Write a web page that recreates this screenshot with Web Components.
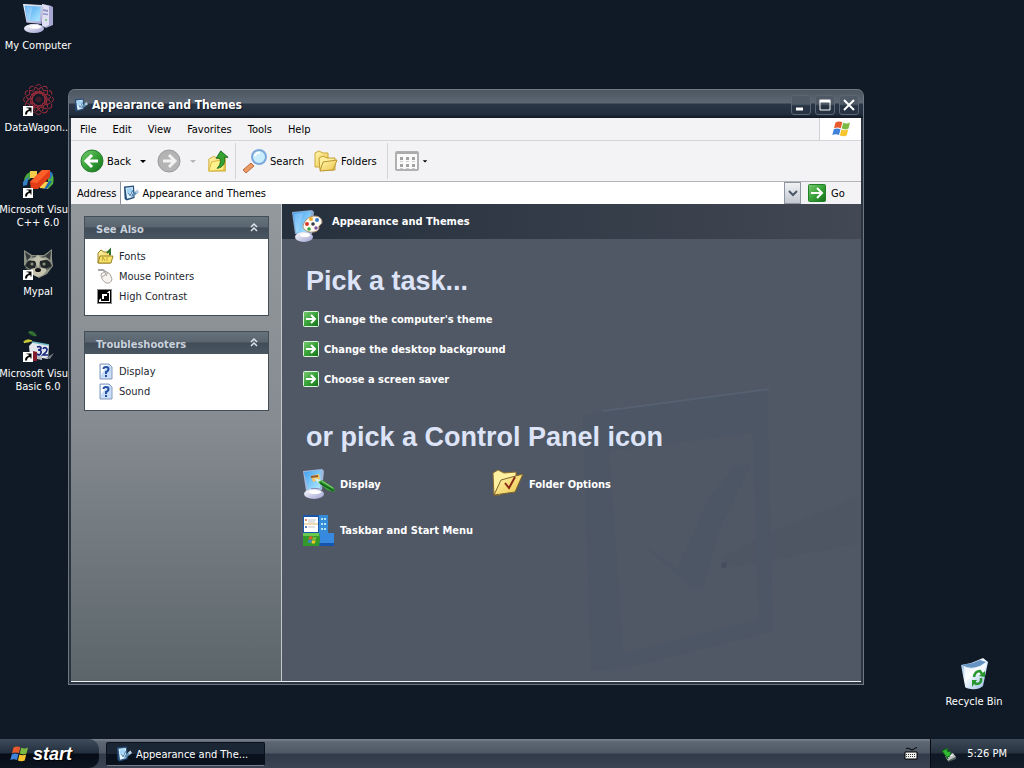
<!DOCTYPE html>
<html lang="en">
<head>
<meta charset="utf-8">
<title>Appearance and Themes</title>
<style>
    html, body {
        height: 100%;
        margin: 0;
        overflow: hidden;
    }

    body {
        --desktop: #101a26;
        --bar: #f3f3f5;
        --heading: #dde4f8;
        background: var(--desktop);
        color: #000;
        font: 11px/13px "DejaVu Sans Condensed", "DejaVu Sans", sans-serif;
    }
</style>
</head>
<body>
<xp-desktop></xp-desktop>

<script>
const GREEN = `<linearGradient id="g" x1="0" y1="0" x2="1" y2="1"><stop offset="0" stop-color="#7ccb74"/><stop offset=".5" stop-color="#37a238"/><stop offset="1" stop-color="#17701c"/></linearGradient>`;
const SCREEN = `<linearGradient id="s" x1="0" y1="0" x2="1" y2="1"><stop offset="0" stop-color="#3f9df0"/><stop offset="1" stop-color="#b4ecff"/></linearGradient>`;
const SHELL = `<linearGradient id="w" x1="0" y1="0" x2="1" y2="1"><stop offset="0" stop-color="#fff"/><stop offset="1" stop-color="#9d9fd0"/></linearGradient>`;
const FOLDER = `<linearGradient id="f" x1="0" y1="0" x2="1" y2="1"><stop offset="0" stop-color="#fff6b0"/><stop offset="1" stop-color="#edc54a"/></linearGradient>`;
const SHORTCUT = `<rect x="1" y="22" width="10" height="10" fill="#fff"/><path d="M3 30.500c0-3 1.500-4.500 3.500-4.500v-1.700H4.500V23.500h5v5h-1V27c-2 0-3.500 1-3.500 3.500z" fill="#000"/>`;
const FLAG = `
    <path d="M4.500 3.500Q8 1.500 11.300 3.300L9.800 9.200Q6.500 7.700 3 9.300z" fill="#e8592b"/>
    <path d="M12.200 3.700Q15.500 5.300 19 3.600L17.500 9.500Q14.200 11.200 10.700 9.600z" fill="#7cbb42"/>
    <path d="M2.800 10.200Q6.300 8.600 9.500 10.200L8 16Q4.700 14.400 1.300 16z" fill="#3f82d8"/>
    <path d="M10.400 10.500Q13.900 12.100 17.200 10.500L15.700 16.400Q12.300 18 8.900 16.400z" fill="#f6c42c"/>`;
const THEMES = `
    <path d="M1 1.500l10-1 .6 12.500-8 2.500-2-1.500z" fill="#264f7c"/>
    <path d="M2.500 2.800l7.400-.8.400 9.900-6.300 1.800z" fill="#e2f3ff"/>
    <path d="M3.500 3.500l5.500-.6.300 4-5.300 1.500z" fill="#a3d3f2"/>
    <path d="M5.500 8l1.500 2.800L10 5" fill="none" stroke="#4378a8"/>
    <path d="M8 12l1-3 4.500-3.500 2 2-4.500 3.500z" fill="#5e8db1"/><path d="M12 6.500l2.500-2 1.500 2.500-2.500 1.700z" fill="#b8cde0"/>`;

const ICONS = {
    computer: [32, `${SCREEN}${SHELL}
        <path d="M20 2l8 1.500 3 1.500v18l-7 3-4-2z" fill="#a5a7d2"/><path d="M20 2l7 2v19l-4 2-3-2z" fill="#e0dff3"/>
        <path d="M21 7l5 1v2l-5-1zM21 11l5 .8v1.500l-5-.8z" fill="#8f92c0"/><circle cx="24" cy="18" r="1" fill="#6cc35a"/>
        <path d="M8 22h8l3 3-9 2z" fill="#8a8cba"/>
        <path d="M1 2l19 1 1.500 2-2 17-15-1.500z" fill="url(#w)"/><path d="M2.500 3.500L19 4.800 17.500 19.500 5 18.500z" fill="url(#s)"/>
        <path d="M3 4l8 .7L7.500 18.500l-2-.2z" fill="#fff" opacity=".25"/>
        <ellipse cx="12" cy="26.500" rx="10" ry="4.500" fill="url(#w)"/><ellipse cx="13" cy="24.800" rx="6" ry="2" fill="#fff"/>`],
    wagon: [32, `<g fill="none" stroke="#9c2c3b" stroke-width="1">${[0, 30, 60, 90, 120, 150].map(a =>
            `<ellipse cx="16.500" cy="15.500" rx="15" ry="6" transform="rotate(${a} 16.500 15.500)" stroke-dasharray="4 1 6 2"/>`).join("")}
        <circle cx="16.500" cy="15.500" r="8" stroke-dasharray="3 1"/></g><circle cx="16.500" cy="15.500" r="3" fill="#401b28"/>${SHORTCUT}`],
    vcpp: [32, `<path d="M8 6l7-1-7 8-6 3c0-5 2-8 6-10z" fill="#48a63c"/><path d="M8 5h7v7H8z" fill="#f5cd4c"/>
        <path d="M27 5c5 3 5 8 4 13l-5 5V13z" fill="#4fb43f"/><path d="M27 4l4 4-3 6-3-6z" fill="#2977c4"/>
        <path d="M1 16l6-6-2 9-4 1z" fill="#347fc5"/><path d="M18 22v-7l8 1v7z" fill="#f6cd51"/><path d="M27 15h3l-5 8h-3z" fill="#1e69ae"/>
        <path d="M8 16L20 4h8v7L16 23H9z" fill="#e23d16"/><path d="M8 16L20 4h8L15 17z" fill="#fb5f2a"/>${SHORTCUT}`],
    mypal: [32, `<path d="M2 2l8 5h12l8-6v10l1 7-6 8-8 4-9-5-6-8z" fill="#8d9285"/><path d="M3 4l6 4-4 5zM29 3l-6 5 5 4z" fill="#34393a"/>
        <path d="M5 14q5-5 10-1l-2 7-5 1-5-3zM17 13q6-4 11 1l2 4-6 3-5-2z" fill="#22282a"/>
        <path d="M5 12l8-2 3-3 3 3 8 1-9 2-2 7-3-7z" fill="#bfbfac"/><path d="M9 21l5-1h5l7 1-5 6-5 2-5-2z" fill="#c6c4ae"/>
        <path d="M10 9l4-1M20 9l4-1M3 20l5 2M29 19l-5 3" stroke="#4a504c"/>
        <circle cx="10" cy="16" r="1.500" fill="#8b9379"/><circle cx="22" cy="16" r="1.500" fill="#8b9379"/><ellipse cx="16" cy="22" rx="3" ry="2" fill="#111"/>${SHORTCUT}`],
    vbasic: [32, `<path d="M6 2c4-3 7 0 9 4-5 1-7-1-9-4z" fill="#245c2a"/><path d="M7 2q4 1 7 4" stroke="#4d8944" fill="none"/>
        <path d="M1 12c3-4 8-3 9-1-3 1-5 3-9 1z" fill="#a5ad28"/><path d="M2 13c3-3 5-2 8-2" fill="none" stroke="#ede855"/>
        <path d="M7 16L11 12l16 3-1 14-18-3z" fill="#e4e8ee"/><path d="M10 12l17 3" stroke="#71bac7" stroke-width="1.500"/>
        <path d="M24 28l8-5-4 6z" fill="#737a82"/><path d="M11 21l4 1v9h-4z" fill="#831d2d"/><path d="M15 25l5 1v4l-5-1z" fill="#b8bfc7"/>
        <g fill="none" stroke="#16257c" stroke-width="1.700"><path d="M15 17q4-1 4 1t-3 2q4 0 3 3t-4 1"/><path d="M21 19q1-2 3-1t0 4l-3 3h5"/></g>${SHORTCUT}`],
    recycle: [32, `<linearGradient id="r" x1="0" y1="0" x2="1" y2="1"><stop offset="0" stop-color="#7facdb"/><stop offset=".45" stop-color="#f4fbff"/><stop offset="1" stop-color="#8db5e0"/></linearGradient>
        <path d="M3 7l10-2 5-2 7-3 5 4-5 24q-5 4-12 3t-6-3z" fill="url(#r)"/><path d="M4 7l11-2 7-3 6 2-6 4q-10 4-18-1z" fill="#6593c2"/>
        <path d="M6 8q7 5 15 1L28 5l-2 13q-6-3-9-1t-10 5z" fill="#fff" opacity=".7"/>
        <g fill="none" stroke="#26962d" stroke-width="2.500"><path d="M16 19q1-6 6-6l2 3M23 20q1 6-5 6l-3-3"/></g><path d="M21 18l6-5v6zM19 22l-5 7v-7z" fill="#26962d"/>`],
    palette: [32, `${SCREEN}${SHELL}<path d="M0 2L20 0l2 2-2 22L3 24z" fill="#8ba9cd"/><path d="M1 3l18-2-2 21-13 1z" fill="url(#s)"/>
        <path d="M2 4l9-1-5 19-2 .5z" fill="#fff" opacity=".2"/><ellipse cx="12" cy="27" rx="9" ry="5" fill="url(#w)"/><ellipse cx="13" cy="25" rx="5" ry="2" fill="#fff"/>
        <path d="M14 10c5-6 16-5 16 2 0 3-4 3-3 6 0 4-9 6-14 2-4-3-1-7 1-10z" fill="#fffaf0" stroke="#a98f76"/>
        <circle cx="19" cy="9" r="2" fill="#f1ae2b"/><circle cx="25" cy="10" r="2" fill="#397dcd"/><circle cx="15" cy="14" r="2" fill="#d63b2d"/><circle cx="17" cy="19" r="1.800" fill="#36a43f"/><circle cx="24" cy="18" r="1.800" fill="#8355a6"/><circle cx="21" cy="14" r="1.800" fill="#333a4e"/>`],
    display: [32, `${SCREEN}${SHELL}<path d="M0 3L19 1l2 2-2 19L3 23z" fill="#9fb8dc"/><path d="M1 4l17-2-1 18L5 21z" fill="url(#s)"/>
        <path d="M8 8l8-2 1 5-7 3z" fill="#f5c665"/><path d="M8 9l7-1" stroke="#93572c" stroke-width="2"/>
        <path d="M8 20h7l3 4-8 2z" fill="#8a8cba"/><ellipse cx="11" cy="26" rx="10" ry="5" fill="url(#w)"/><ellipse cx="12" cy="24" rx="6" ry="2" fill="#fff"/>
        <path d="M11 10l7 2 2 5-5-2z" fill="#d3f0ec"/><path d="M15 14l4-2 12 8 1 4-8-2z" fill="#3ba43a"/><path d="M17 15l14 8" stroke="#126119" stroke-width="1.500"/><path d="M19 13l11 7" stroke="#83d070"/>`],
    folderOptions: [32, `${FOLDER}<path d="M1 5l5-3 6 3 12-1v8L8 27H2z" fill="#fff1a0" stroke="#8c6f32"/>
        <path d="M2 27l7-15 22-6-8 18z" fill="url(#f)" stroke="#7f6227"/><path d="M13 15l4 5 6-11" fill="none" stroke="#872a15" stroke-width="2"/>`],
    taskbar: [32, `<path d="M0 1h25v25H0z" fill="#1955a8"/><path d="M16 1h9v19h-9z" fill="#368bd8"/><path d="M1 3h14v15H1z" fill="#fff"/>
        <path d="M1 10h14" stroke="#deb663"/><path d="M5 6h8M5 8h7M5 13h7" stroke="#c4c4cc"/><circle cx="3" cy="6" r="1" fill="#dd6931"/><circle cx="3" cy="13" r="1" fill="#2551aa"/><path d="M18 5h5M18 10h5M18 15h5" stroke="#b1e3f9" stroke-width="2" stroke-dasharray="2 1"/>
        <path d="M15 19h16v13H15z" fill="#3788df"/><path d="M16 29h15v3H16z" fill="#1555ac"/><path d="M0 19h16q2 5 0 13H0z" fill="#34992b"/><path d="M0 19h16v3H0z" fill="#69c94e"/><g transform="translate(4 21) scale(.5)">${FLAG}</g>`],
    back: [24, `${GREEN}<circle cx="12" cy="12" r="11" fill="url(#g)" stroke="#257e2b"/><path d="M12 6l-6 6 6 6M7 12h11" fill="none" stroke="#fff" stroke-width="3"/>`],
    forward: [24, `<circle cx="12" cy="12" r="11" fill="#b4b4b4" stroke="#999"/><path d="M12 6l6 6-6 6M17 12H6" fill="none" stroke="#f2f2f2" stroke-width="3"/>`],
    up: [24, `${FOLDER}<path d="M2 10l5-3 5 2h8v14H2z" fill="url(#f)" stroke="#cba631"/><path d="M2 23l3-10 15-3-2 12z" fill="#fff18b" stroke="#dbb63a"/>
        <path d="M11 20c4-4 4-8 3-11h-4L15 1l8 7h-4c1 6-1 11-8 12z" fill="#36a231" stroke="#196a20"/>`],
    search: [24, `<path d="M8 14l3 3-8 7-3-3z" fill="#eb9a62" stroke="#b66b42"/><circle cx="16" cy="8" r="7" fill="#caedfc" stroke="#7ba7da" stroke-width="2"/><path d="M12 7q1-4 5-3" fill="none" stroke="#fff" stroke-width="2"/>`],
    folders: [24, `${FOLDER}<path d="M1 4l4-2 4 2h5v14H1z" fill="url(#f)" stroke="#cda938"/><path d="M5 9l4-2 4 2h8v12H6z" fill="#fff0a0" stroke="#c39d34"/><path d="M6 22l3-9 14-2-4 10z" fill="url(#f)" stroke="#bd952c"/>`],
    views: [24, `<rect x="1" y="3" width="22" height="18" rx="1" fill="#fafafa" stroke="#b0b0b0" stroke-width="2"/><path d="M2 4h20" stroke="#ababab" stroke-width="2"/><path d="M5 9.500h15M5 16.500h15" stroke="#a2a2a2" stroke-width="3" stroke-dasharray="3 3"/><path d="M5 12.500h15M5 19.500h15" stroke="#ccc" stroke-dasharray="3 3"/>`],
    themes: [16, THEMES],
    flag: [20, FLAG],
    go: [18, `${GREEN}<rect x=".500" y=".500" width="17" height="17" rx="1" fill="url(#g)" stroke="#238026"/><path d="M3 9h11M9 4l5 5-5 5" fill="none" stroke="#fff" stroke-width="2"/>`],
    task: [16, `${GREEN}<rect x=".500" y=".500" width="15" height="15" rx="1" fill="url(#g)" stroke="#dcf5dd"/><path d="M3 8h9M8 4l4 4-4 4" fill="none" stroke="#fff" stroke-width="2"/>`],
    fonts: [16, `${FOLDER}<path d="M1 5l3-3 3 2h6v11H1z" fill="url(#f)" stroke="#9b8425"/><path d="M1 15l2-7h13l-2 7z" fill="#f9e36c" stroke="#9b8425"/><path d="M10 5l3-3v5" stroke="#30702a" fill="none" stroke-width="2"/><path d="M5 13l1-4 2 4m2-4v4" stroke="#c2a636" fill="none"/>`],
    mouse: [16, `<path d="M1 2h5l4 3" fill="none" stroke="#a5a5a5" stroke-width="2"/><path d="M4 6q5-4 9 0l2 5q-1 5-6 4-5-3-5-9z" fill="#f6f3ef" stroke="#aaa6a0"/><path d="M5 9l6-4M8 5l2 3" stroke="#a8a39e"/>`],
    contrast: [16, `<path d="M0 1h15v15H0z" fill="#888"/><path d="M1 2h13v13H1z" fill="#000"/><path d="M2 14V12L12 3h1v11z" fill="#fff"/><path d="M4 5h8v8H4z" fill="#000"/><path d="M5 6h5v5H5z" fill="#fff"/><path d="M7 8h4v4H7z" fill="#000"/>`],
    help: [16, `<path d="M3 1h9l3 3v12H3z" fill="#c9defa" stroke="#8799bb"/><path d="M4 2h7L4 12z" fill="#fff"/><path d="M6.500 6q0-2 2.500-2t2.500 2-2.500 3v2m0 1v2" fill="none" stroke="#244fa1" stroke-width="2"/>`],
    keyboard: [16, `<path d="M3 3q2-2 4 0t4 0 3-1" fill="none" stroke="#000"/><path d="M2 6h12v7H2z" fill="#f4f4f4" stroke="#000"/><path d="M3 8.500h10M3 10.500h10" stroke="#333" stroke-dasharray="1 1"/>`],
    device: [16, `<path d="M4 10l8-3 3 4-8 4z" fill="#b9c0bd"/><path d="M7 15l8-4v2l-8 3z" fill="#555f5e"/><path d="M1 5l6-3-1 3 4 1-1 4-3 1 1 2z" fill="#31b832" stroke="#126518"/><path d="M9 10l3-1" stroke="#fff"/>`],
    chevrons: [16, `<path d="M5 7l3-3 3 3M5 11l3-3 3 3" fill="none" stroke="#dce5ed" stroke-width="1.500"/>`],
    arrow: [8, `<path d="M1 3h6L4 6z" fill="currentColor"/>`],
    drop: [12, `<path d="M2 4l4 4 4-4" fill="none" stroke="#4b5667" stroke-width="2"/>`],
    minimize: [14, `<path d="M2 11h7" stroke="#fff" stroke-width="3"/>`],
    maximize: [14, `<path d="M2 3h10v9H2z" fill="none" stroke="#fff"/><path d="M1.500 3h11" stroke="#fff" stroke-width="3"/>`],
    close: [14, `<path d="M2 2l10 10M12 2L2 12" stroke="#fff" stroke-width="2"/>`],
};

class XpIcon extends HTMLElement {

    constructor() {
        super();
        this.attachShadow({ mode: "open" });
    }

    connectedCallback() {
        const [box, art] = ICONS[this.getAttribute("name")];
        const size = this.getAttribute("size") || box;
        this.shadowRoot.innerHTML = `
            <style>
                :host { display: block; flex: none; }
                svg { display: block; overflow: visible; }
            </style>
            <svg width="${size}" height="${size}" viewBox="0 0 ${box} ${box}" aria-hidden="true">${art}</svg>
        `;
    }

}

customElements.define("xp-icon", XpIcon);


class DesktopIcon extends HTMLElement {

    constructor() {
        super();
        this.attachShadow({ mode: "open" });
    }

    connectedCallback() {
        this.shadowRoot.innerHTML = `
            <style>
                :host { display: block; width: 80px; }
                a {
                    display: flex;
                    flex-direction: column;
                    align-items: center;
                    gap: 5px;
                    color: #fff;
                    text-align: center;
                    text-decoration: none;
                }
            </style>
            <a href="#"><xp-icon name="${this.getAttribute("icon")}"></xp-icon><span><slot></slot></span></a>
        `;
    }

}

customElements.define("desktop-icon", DesktopIcon);


class XpTitlebar extends HTMLElement {

    constructor() {
        super();
        this.attachShadow({ mode: "open" });
    }

    connectedCallback() {
        this.shadowRoot.innerHTML = `
            <style>
                :host {
                    display: flex;
                    align-items: center;
                    gap: 4px;
                    height: 29px;
                    box-sizing: border-box;
                    padding: 2px 4px 0 5px;
                    border-top: 1px solid #727b84;
                    border-radius: 6px 6px 0 0;
                    background: linear-gradient(#4c5762, #5c6773 13px, #2a3646 14px, #222d3e 24px, #101823);
                }
                h1 {
                    flex: 1;
                    margin: 0;
                    color: #fff;
                    font-size: 12px;
                    line-height: 16px;
                    text-shadow: 1px 1px 1px #111a28;
                }
                .controls { display: flex; gap: 4px; }
                button {
                    display: grid;
                    place-items: center;
                    width: 20px;
                    height: 20px;
                    padding: 0;
                    border: 1px solid #5c6672;
                    border-radius: 3px;
                    background: linear-gradient(#4f5a66 45%, #273343 55%);
                }
            </style>
            <xp-icon name="themes" size="14"></xp-icon>
            <h1><slot></slot></h1>
            <div class="controls">
                <button aria-label="Minimize"><xp-icon name="minimize"></xp-icon></button>
                <button aria-label="Maximize"><xp-icon name="maximize"></xp-icon></button>
                <button aria-label="Close"><xp-icon name="close"></xp-icon></button>
            </div>
        `;
    }

}

customElements.define("xp-titlebar", XpTitlebar);


class XpMenubar extends HTMLElement {

    constructor() {
        super();
        this.attachShadow({ mode: "open" });
    }

    connectedCallback() {
        const items = ["File", "Edit", "View", "Favorites", "Tools", "Help"];
        this.shadowRoot.innerHTML = `
            <style>
                :host {
                    display: flex;
                    height: 23px;
                    box-sizing: border-box;
                    border-bottom: 1px solid #d5d5d7;
                    background: var(--bar);
                }
                nav { display: flex; flex: 1; padding-left: 1px; }
                button { padding: 0 8px; border: 0; background: none; font: inherit; color: inherit; }
                .logo {
                    display: grid;
                    place-items: center;
                    width: 41px;
                    border-left: 1px solid #d0d0d2;
                    background: #fff;
                }
            </style>
            <nav>${items.map(i => `<button>${i}</button>`).join("")}</nav>
            <div class="logo"><xp-icon name="flag"></xp-icon></div>
        `;
    }

}

customElements.define("xp-menubar", XpMenubar);


class XpToolbar extends HTMLElement {

    constructor() {
        super();
        this.attachShadow({ mode: "open" });
    }

    connectedCallback() {
        this.shadowRoot.innerHTML = `
            <style>
                :host {
                    display: flex;
                    align-items: center;
                    height: 41px;
                    box-sizing: border-box;
                    padding: 2px 0 2px 4px;
                    border-bottom: 1px solid #b5b5b9;
                    background: var(--bar);
                }
                button {
                    display: flex;
                    align-items: center;
                    gap: 3px;
                    height: 32px;
                    padding: 0 5px;
                    border: 0;
                    background: none;
                    color: inherit;
                    font: inherit;
                }
                .split { gap: 8px; }
                .split span { display: flex; align-items: center; gap: 3px; }
                .off { color: #b5b5b5; }
                .group { display: flex; padding-right: 4px; }
                hr { align-self: stretch; width: 1px; margin: 0 2px 0 1px; border: 0; background: #d4d4d6; }
            </style>
            <button class="split"><span><xp-icon name="back"></xp-icon>Back</span><xp-icon name="arrow"></xp-icon></button>
            <button class="split off" aria-label="Forward" disabled><xp-icon name="forward"></xp-icon><xp-icon name="arrow"></xp-icon></button>
            <button aria-label="Up"><xp-icon name="up" size="22"></xp-icon></button>
            <hr>
            <div class="group">
                <button><xp-icon name="search"></xp-icon>Search</button>
                <button><xp-icon name="folders"></xp-icon>Folders</button>
            </div>
            <hr>
            <button aria-label="Views"><xp-icon name="views"></xp-icon><xp-icon name="arrow" size="6"></xp-icon></button>
        `;
    }

}

customElements.define("xp-toolbar", XpToolbar);


class XpAddress extends HTMLElement {

    constructor() {
        super();
        this.attachShadow({ mode: "open" });
    }

    connectedCallback() {
        this.shadowRoot.innerHTML = `
            <style>
                :host {
                    display: flex;
                    align-items: center;
                    height: 22px;
                    padding-left: 6px;
                    background: var(--bar);
                }
                .box {
                    display: flex;
                    flex: 1;
                    align-items: center;
                    gap: 3px;
                    align-self: stretch;
                    margin-left: 4px;
                    padding-left: 2px;
                    border-left: 1px solid #8f949c;
                    background: #fff;
                }
                input { flex: 1; min-width: 0; padding: 1px 0 0; border: 0; outline: 0; background: none; color: inherit; font: inherit; }
                button { padding: 0; border: 0; background: none; color: inherit; font: inherit; }
                .drop {
                    display: grid;
                    place-items: center;
                    align-self: stretch;
                    width: 17px;
                    border: 1px solid #8e96a1;
                    background: linear-gradient(#f0f2f5, #c3c8d0);
                }
                .go { display: flex; align-items: center; gap: 5px; width: 60px; padding-left: 7px; }
            </style>
            <label for="address">Address</label>
            <div class="box">
                <xp-icon name="themes"></xp-icon>
                <input id="address" value="Appearance and Themes">
                <button class="drop" aria-label="Show addresses"><xp-icon name="drop"></xp-icon></button>
            </div>
            <button class="go"><xp-icon name="go"></xp-icon>Go</button>
        `;
    }

}

customElements.define("xp-address", XpAddress);


class SidePanel extends HTMLElement {

    constructor() {
        super();
        this.attachShadow({ mode: "open" });
    }

    connectedCallback() {
        this.shadowRoot.innerHTML = `
            <style>
                :host { display: block; border: 1px solid #434e57; background: #fff; }
                header {
                    display: flex;
                    align-items: center;
                    justify-content: space-between;
                    height: 22px;
                    padding: 0 6px 0 11px;
                    background: linear-gradient(#65717b, #5a6570 45%, #414c59 50%, #4b5663);
                }
                h2 { margin: 2px 0 0; color: #c9d2dc; font-size: 11px; line-height: 13px; }
                button { padding: 0; border: 0; background: none; }
                div { display: flex; flex-direction: column; gap: 4px; padding: 9px 12px 11px; }
            </style>
            <header><h2>${this.getAttribute("heading")}</h2><button aria-label="Collapse"><xp-icon name="chevrons"></xp-icon></button></header>
            <div><slot></slot></div>
        `;
    }

}

customElements.define("side-panel", SidePanel);


/* Icon and label in a row; used in the side panels and for tasks. */
class IconLink extends HTMLElement {

    constructor() {
        super();
        this.attachShadow({ mode: "open" });
    }

    connectedCallback() {
        this.shadowRoot.innerHTML = `
            <style>
                :host { display: block; }
                a { display: flex; align-items: center; gap: var(--link-gap, 6px); color: inherit; text-decoration: none; }
            </style>
            <a href="#"><xp-icon name="${this.getAttribute("icon")}"></xp-icon><span><slot></slot></span></a>
        `;
    }

}

customElements.define("icon-link", IconLink);


class ControlPanel extends HTMLElement {

    constructor() {
        super();
        this.attachShadow({ mode: "open" });
    }

    connectedCallback() {
        this.shadowRoot.innerHTML = `
            <style>
                :host { display: flex; min-height: 0; }
                aside {
                    display: flex;
                    flex-direction: column;
                    gap: 15px;
                    width: 211px;
                    box-sizing: border-box;
                    padding: 12px 12px 0 13px;
                    border-right: 1px solid #c3c8cc;
                    background: linear-gradient(#93989c, #868c91 45%, #5b656a);
                }
                aside icon-link { color: #1e2730; }
                main {
                    position: relative;
                    flex: 1;
                    min-width: 0;
                    background: #505765;
                    color: #fff;
                    font-weight: bold;
                }
                .banner {
                    display: flex;
                    align-items: center;
                    gap: 8px;
                    height: 35px;
                    padding-left: 10px;
                    background: linear-gradient(90deg, #26303d, #424854);
                }
                .banner h2 { margin: 0; font-size: 11px; line-height: 13px; }
                .banner xp-icon { height: 24px; }
                .content { position: relative; padding: 26px 21px; }
                h3 {
                    margin: 0 0 0 3px;
                    color: var(--heading);
                    font: bold 27px/32px "Liberation Sans", Arial, sans-serif;
                }
                .tasks {
                    --link-gap: 5px;
                    display: flex;
                    flex-direction: column;
                    gap: 14px;
                    margin: 14px 0 34px;
                }
                .icons {
                    --link-gap: 5px;
                    display: grid;
                    grid-template-columns: repeat(auto-fill, 189px);
                    gap: 14px 0;
                    margin-top: 15px;
                }
                .mark { position: absolute; right: 0; bottom: 0; width: 280px; height: 300px; }
            </style>
            <aside>
                <side-panel heading="See Also">
                    <icon-link icon="fonts">Fonts</icon-link>
                    <icon-link icon="mouse">Mouse Pointers</icon-link>
                    <icon-link icon="contrast">High Contrast</icon-link>
                </side-panel>
                <side-panel heading="Troubleshooters">
                    <icon-link icon="help">Display</icon-link>
                    <icon-link icon="help">Sound</icon-link>
                </side-panel>
            </aside>
            <main>
                <svg class="mark" viewBox="0 0 280 300" aria-hidden="true">
                    <g fill="#4c5664">
                        <path fill-rule="evenodd" d="M2 34L186 8 192 250 30 290 10 288zM28 70L172 52 178 238 42 272z"/>
                        <path d="M60 162l36 26 32-70 26-34h16L138 150 122 206h-12z"/>
                        <path d="M140 176l54-26 86-36v48l-84 16-46 8z" opacity=".5"/>
                    </g>
                    <path d="M22 30L188 8" stroke="#556070" stroke-width="2"/>
                    <circle cx="143" cy="184" r="3" fill="#464f5d"/>
                </svg>
                <div class="banner"><xp-icon name="palette"></xp-icon><h2>Appearance and Themes</h2></div>
                <div class="content">
                    <h3>Pick a task...</h3>
                    <div class="tasks">
                        <icon-link icon="task">Change the computer's theme</icon-link>
                        <icon-link icon="task">Change the desktop background</icon-link>
                        <icon-link icon="task">Choose a screen saver</icon-link>
                    </div>
                    <h3>or pick a Control Panel icon</h3>
                    <div class="icons">
                        <icon-link icon="display">Display</icon-link>
                        <icon-link icon="folderOptions">Folder Options</icon-link>
                        <icon-link icon="taskbar">Taskbar and Start Menu</icon-link>
                    </div>
                </div>
            </main>
        `;
    }

}

customElements.define("control-panel", ControlPanel);


class XpWindow extends HTMLElement {

    constructor() {
        super();
        this.attachShadow({ mode: "open" });
    }

    connectedCallback() {
        this.shadowRoot.innerHTML = `
            <style>
                :host {
                    display: flex;
                    flex-direction: column;
                    box-sizing: border-box;
                    border: 1px solid #6d7681;
                    border-top: 0;
                    border-radius: 7px 7px 0 0;
                    background: #2b3542;
                }
                .body {
                    display: flex;
                    flex: 1;
                    flex-direction: column;
                    min-height: 0;
                    margin: 0 2px 2px;
                    border-bottom: 1px solid #eef0f4;
                }
                control-panel { flex: 1; }
            </style>
            <xp-titlebar>Appearance and Themes</xp-titlebar>
            <div class="body">
                <xp-menubar></xp-menubar>
                <xp-toolbar></xp-toolbar>
                <xp-address></xp-address>
                <control-panel></control-panel>
            </div>
        `;
    }

}

customElements.define("xp-window", XpWindow);


class XpTaskbar extends HTMLElement {

    constructor() {
        super();
        this.attachShadow({ mode: "open" });
    }

    connectedCallback() {
        this.shadowRoot.innerHTML = `
            <style>
                :host {
                    display: flex;
                    height: 29px;
                    color: #fff;
                    background: linear-gradient(#7b838d, #5d6773 3px, #4f5966 14px, #303a48 15px, #3a4452);
                }
                button { color: inherit; font: inherit; border: 0; }
                .start {
                    display: flex;
                    align-items: center;
                    gap: 4px;
                    width: 99px;
                    padding: 0 0 0 9px;
                    border-radius: 0 10px 10px 0;
                    background: linear-gradient(#3f4c5b, #222e3d 14px, #060c16 15px, #0c1521);
                    font: italic bold 18px/22px "Liberation Sans", Arial, sans-serif;
                    text-shadow: 1px 1px 1px #000;
                }
                .task {
                    display: flex;
                    align-items: center;
                    gap: 4px;
                    width: 159px;
                    margin: 3px 0 2px 7px;
                    padding: 0 9px;
                    border: 1px solid #0a101a;
                    border-bottom-color: #77808a;
                    border-radius: 2px;
                    background: linear-gradient(#1b2635 50%, #09111d 52%);
                }
                .lang { margin: 7px 11px 0 auto; }
                .tray {
                    display: flex;
                    align-items: center;
                    gap: 10px;
                    padding: 0 17px 0 10px;
                    border-left: 1px solid #070c14;
                    background: linear-gradient(#3d4957, #263240 14px, #0e1723 15px, #141e2b);
                }
            </style>
            <button class="start"><xp-icon name="flag"></xp-icon>start</button>
            <button class="task"><xp-icon name="themes"></xp-icon>Appearance and The...</button>
            <xp-icon class="lang" name="keyboard"></xp-icon>
            <div class="tray"><xp-icon name="device"></xp-icon><span>5:26 PM</span></div>
        `;
    }

}

customElements.define("xp-taskbar", XpTaskbar);


class XpDesktop extends HTMLElement {

    constructor() {
        super();
        this.attachShadow({ mode: "open" });
    }

    connectedCallback() {
        this.shadowRoot.innerHTML = `
            <style>
                :host { display: flex; flex-direction: column; height: 100vh; }
                .area { position: relative; flex: 1; }
                .shortcuts {
                    display: grid;
                    grid-auto-rows: 82px;
                    width: 76px;
                    padding-top: 2px;
                    justify-content: center;
                }
                .bin { position: absolute; right: 10px; bottom: 31px; }
                xp-window { position: absolute; top: 89px; right: 160px; bottom: 54px; left: 68px; }
            </style>
            <div class="area">
                <div class="shortcuts">
                    <desktop-icon icon="computer">My Computer</desktop-icon>
                    <desktop-icon icon="wagon">DataWagon...</desktop-icon>
                    <desktop-icon icon="vcpp">Microsoft Visual C++ 6.0</desktop-icon>
                    <desktop-icon icon="mypal">Mypal</desktop-icon>
                    <desktop-icon icon="vbasic">Microsoft Visual Basic 6.0</desktop-icon>
                </div>
                <desktop-icon class="bin" icon="recycle">Recycle Bin</desktop-icon>
                <xp-window></xp-window>
            </div>
            <xp-taskbar></xp-taskbar>
        `;
    }

}

customElements.define("xp-desktop", XpDesktop);
</script>
</body>
</html>
